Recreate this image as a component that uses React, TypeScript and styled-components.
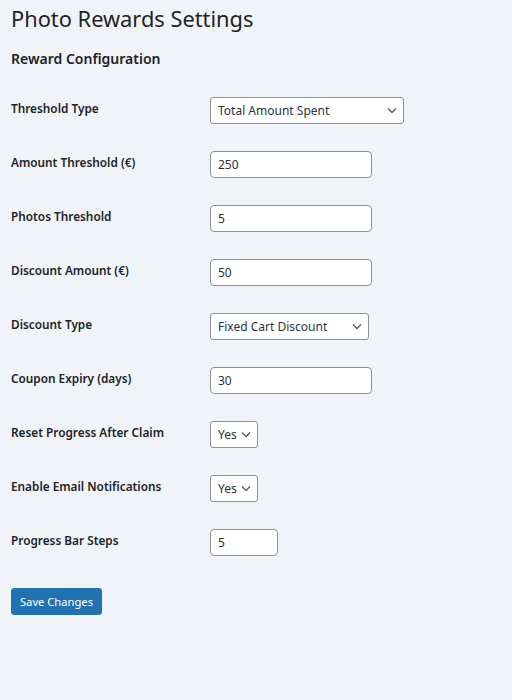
import React from "react";
import styled, { createGlobalStyle } from "styled-components";

const GlobalStyle = createGlobalStyle`
  html, body {
    margin: 0;
    padding: 0;
    background: #f0f3f7;
  }
  body {
    font-family: "Noto Sans", "Open Sans", sans-serif;
    color: #1d2327;
    font-size: 13px;
  }
`;

const Wrap = styled.div`
  padding: 4px 11px 40px;
  min-height: 700px;
  box-sizing: border-box;
`;

const Title = styled.h1`
  font-size: 21.8px;
  font-weight: 400;
  margin: 0;
  line-height: 30px;
  color: #1d2327;
`;

const SectionTitle = styled.h2`
  font-size: 14px;
  font-weight: 600;
  margin: 15px 0 0;
  line-height: 20px;
`;

const Form = styled.form`
  display: flex;
  flex-direction: column;
  margin-top: 14px;
`;

const Row = styled.div`
  display: grid;
  grid-template-columns: 199px 1fr;
  align-items: center;
  height: 54px;
`;

const Label = styled.label`
  font-size: 11.8px;
  font-weight: 600;
  padding-bottom: 5px;
`;

const TextInput = styled.input<{ $width: number }>`
  width: ${p => p.$width}px;
  height: 27px;
  box-sizing: border-box;
  border: 1px solid #8c8f94;
  border-radius: 4px;
  background: #fff;
  padding: 0 7px;
  font-family: inherit;
  font-size: 12px;
  color: #2c3338;
`;

const SelectBox = styled.div<{ $width: number }>`
  position: relative;
  width: ${p => p.$width}px;
  height: 27px;
`;

const Select = styled.select`
  appearance: none;
  width: 100%;
  height: 100%;
  box-sizing: border-box;
  border: 1px solid #8c8f94;
  border-radius: 3px;
  background: #fff;
  padding: 0 18px 0 7px;
  font-family: inherit;
  font-size: 12px;
  color: #2c3338;
`;

const Chevron = styled.svg`
  position: absolute;
  right: 7px;
  top: 10px;
  width: 10px;
  height: 7px;
  pointer-events: none;
`;

const SaveButton = styled.button`
  margin-top: 19px;
  width: 91px;
  height: 27px;
  background: #2271b1;
  border: 1px solid #2271b1;
  border-radius: 3px;
  color: #fff;
  font-family: inherit;
  font-size: 11.2px;
  padding: 0;
`;

const Dropdown = ({ width, value, options }: { width: number; value: string; options: string[] }) => (
  <SelectBox $width={width}>
    <Select defaultValue={value}>
      {options.map(o => (
        <option key={o}>{o}</option>
      ))}
    </Select>
    <Chevron viewBox="0 0 10 7">
      <path d="M1 1.5 L5 5.5 L9 1.5" fill="none" stroke="#50575e" strokeWidth="1.3" />
    </Chevron>
  </SelectBox>
);

export default function App() {
  return (
    <Wrap>
      <GlobalStyle />
      <Title>Photo Rewards Settings</Title>
      <SectionTitle>Reward Configuration</SectionTitle>
      <Form onSubmit={e => e.preventDefault()}>
        <Row>
          <Label>Threshold Type</Label>
          <Dropdown width={194} value="Total Amount Spent" options={["Total Amount Spent", "Number of Photos"]} />
        </Row>
        <Row>
          <Label>Amount Threshold (€)</Label>
          <TextInput $width={162} defaultValue="250" />
        </Row>
        <Row>
          <Label>Photos Threshold</Label>
          <TextInput $width={162} defaultValue="5" />
        </Row>
        <Row>
          <Label>Discount Amount (€)</Label>
          <TextInput $width={162} defaultValue="50" />
        </Row>
        <Row>
          <Label>Discount Type</Label>
          <Dropdown width={159} value="Fixed Cart Discount" options={["Fixed Cart Discount", "Percentage Discount"]} />
        </Row>
        <Row>
          <Label>Coupon Expiry (days)</Label>
          <TextInput $width={162} defaultValue="30" />
        </Row>
        <Row>
          <Label>Reset Progress After Claim</Label>
          <Dropdown width={48} value="Yes" options={["Yes", "No"]} />
        </Row>
        <Row>
          <Label>Enable Email Notifications</Label>
          <Dropdown width={48} value="Yes" options={["Yes", "No"]} />
        </Row>
        <Row>
          <Label>Progress Bar Steps</Label>
          <TextInput $width={68} defaultValue="5" />
        </Row>
        <div>
          <SaveButton type="submit">Save Changes</SaveButton>
        </div>
      </Form>
    </Wrap>
  );
}
